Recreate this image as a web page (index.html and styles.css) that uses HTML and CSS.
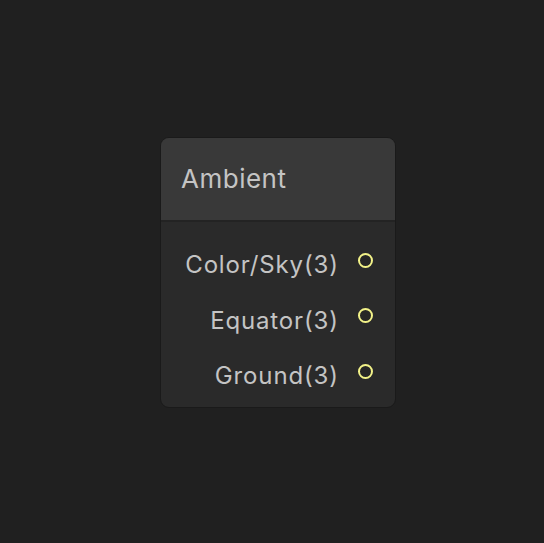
FILE: index.html
```html
<!DOCTYPE html>
<html>
<head>
<meta charset="utf-8">
<link rel="stylesheet" href="styles.css">
</head>
<body>
<div class="canvas">
  <div class="node">
    <div class="node-header">Ambient</div>
    <div class="node-body">
      <div class="port"><span class="port-label">Color/Sky(3)</span><span class="port-dot"></span></div>
      <div class="port"><span class="port-label">Equator(3)</span><span class="port-dot"></span></div>
      <div class="port"><span class="port-label">Ground(3)</span><span class="port-dot"></span></div>
    </div>
  </div>
</div>
</body>
</html>
```
FILE: styles.css
```css
html, body {
  margin: 0;
  padding: 0;
  background: #202020;
}
.canvas {
  position: relative;
  width: 544px;
  height: 543px;
  overflow: hidden;
  font-family: Inter, "Noto Sans", sans-serif;
}
.node {
  position: absolute;
  left: 160px;
  top: 137px;
  width: 236px;
  height: 271px;
  box-sizing: border-box;
  border: 1px solid #1a1a1a;
  border-radius: 9px;
  background: #2a2a2a;
  overflow: hidden;
  display: flex;
  flex-direction: column;
}
.node-header {
  height: 84px;
  box-sizing: border-box;
  background: #393939;
  border-bottom: 2px solid #232323;
  color: #c4c4c4;
  font-size: 26px;
  letter-spacing: 0.5px;
  padding-left: 20px;
  padding-bottom: 2px;
  display: flex;
  align-items: center;
  flex-shrink: 0;
}
.node-body {
  padding-top: 15px;
  display: flex;
  flex-direction: column;
}
.port {
  height: 55.5px;
  display: flex;
  align-items: center;
  justify-content: flex-end;
  padding-right: 22px;
  gap: 20px;
}
.port-label {
  color: #c4c4c4;
  font-size: 24px;
  letter-spacing: 0.85px;
  margin-right: -0.85px;
}
.port-dot {
  width: 15px;
  height: 15px;
  box-sizing: border-box;
  border: 2px solid #f2f288;
  border-radius: 50%;
  background: #262626;
  margin-top: -9px;
}
```
